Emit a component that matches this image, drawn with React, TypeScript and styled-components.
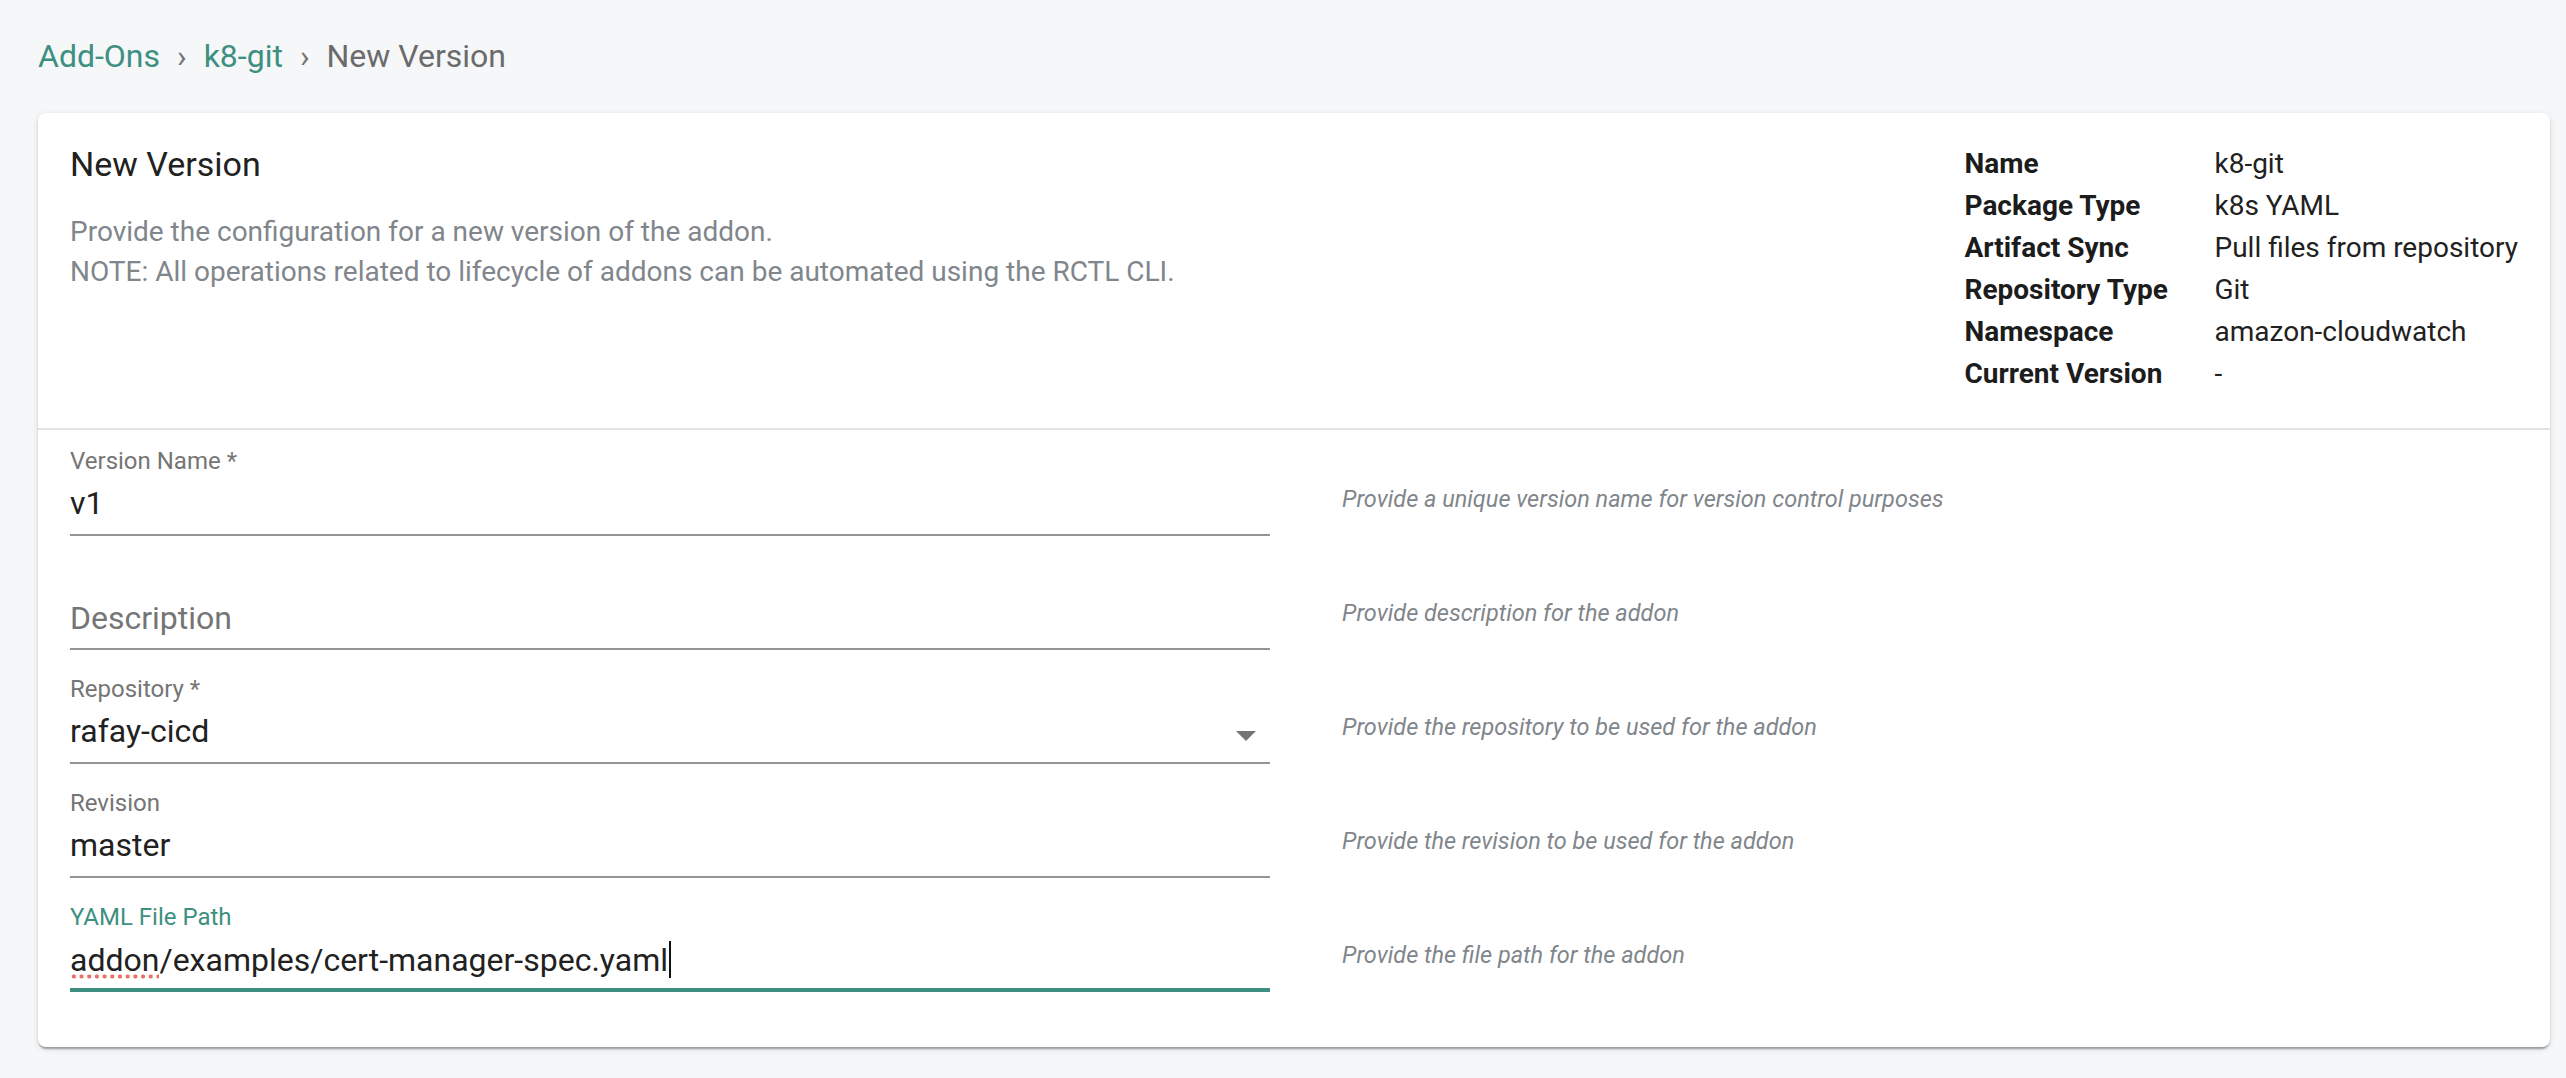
import React from "react";
import styled, { createGlobalStyle } from "styled-components";

const GlobalStyle = createGlobalStyle`
  html, body {
    margin: 0;
    padding: 0;
    background: #f6f7f9;
  }
  body {
    font-family: Roboto, "Liberation Sans", Arial, sans-serif;
    -webkit-font-smoothing: antialiased;
  }
  * { box-sizing: border-box; }
`;

const Page = styled.div`
  min-height: 1078px;
  padding: 32px 16px 32px 38px;
  background: #f6f7f9;
`;

const Breadcrumbs = styled.nav`
  display: flex;
  align-items: baseline;
  font-size: 32px;
  line-height: 48px;
  margin-bottom: 33px;
`;

const Crumb = styled.span<{ $current?: boolean }>`
  color: ${(p) => (p.$current ? "#6b6b6b" : "#3d907f")};
  cursor: ${(p) => (p.$current ? "default" : "pointer")};
`;

const Separator = styled.span`
  color: #757575;
  margin: 0 17px;
`;

const Card = styled.section`
  background: #ffffff;
  border-radius: 8px;
  box-shadow: 0px 4px 2px -2px rgba(0, 0, 0, 0.2), 0px 2px 2px 0px rgba(0, 0, 0, 0.14),
    0px 2px 6px 0px rgba(0, 0, 0, 0.12);
`;

const Header = styled.header`
  display: flex;
  justify-content: space-between;
  padding: 30px 32px 33px 32px;
  border-bottom: 2px solid #e3e3e3;
`;

const HeaderMain = styled.div`
  flex: 1;
`;

const Title = styled.h2`
  margin: 0;
  font-size: 34px;
  line-height: 42px;
  font-weight: 400;
  color: #212121;
`;

const Description = styled.div`
  margin-top: 27px;
  font-size: 28px;
  line-height: 40px;
  color: #80868b;
`;

const InfoTable = styled.dl`
  margin: 0;
  display: grid;
  grid-template-columns: 250px auto;
  font-size: 28px;
  line-height: 42px;
`;

const InfoLabel = styled.dt`
  font-weight: 700;
  color: #1c1c1c;
`;

const InfoValue = styled.dd`
  margin: 0;
  color: #212121;
  white-space: nowrap;
`;

const Fields = styled.div`
  display: flex;
  flex-direction: column;
  gap: 8px;
  padding: 0 32px 55px 32px;
`;

const FieldRow = styled.div`
  display: grid;
  grid-template-columns: 1200px 1fr;
  column-gap: 72px;
`;

const Field = styled.div<{ $focused?: boolean }>`
  height: 106px;
  padding-top: 18px;
  display: flex;
  flex-direction: column;
  border-bottom: ${(p) => (p.$focused ? "4px solid #3d907f" : "2px solid #949494")};
`;

const Label = styled.label<{ $focused?: boolean }>`
  display: block;
  height: 26px;
  font-size: 24px;
  line-height: 26px;
  color: ${(p) => (p.$focused ? "#3d907f" : "#757575")};
  margin-bottom: 11px;
`;

const ValueRow = styled.div<{ $placeholder?: boolean }>`
  height: 36px;
  display: flex;
  align-items: flex-start;
  justify-content: space-between;
  font-size: 32px;
  line-height: 36px;
  color: ${(p) => (p.$placeholder ? "#757575" : "#212121")};
  white-space: nowrap;
  margin-top: ${(p) => (p.$placeholder ? "1px" : "0")};
`;

const DropIcon = styled.svg`
  width: 48px;
  height: 48px;
  margin-top: -2px;
  flex: none;
  fill: #757575;
`;

const Misspelled = styled.span`
  background-image: radial-gradient(circle, #ec6f66 1.8px, transparent 2.3px);
  background-size: 7.7px 5px;
  background-repeat: repeat-x;
  background-position: 0 100%;
`;

const Caret = styled.span`
  display: inline-block;
  width: 2px;
  height: 37px;
  margin-left: 1px;
  vertical-align: -7px;
  background: #111;
`;

const Help = styled.div`
  padding-top: 57px;
  font-size: 23.5px;
  line-height: 24px;
  font-style: italic;
  color: #80868b;
  white-space: nowrap;
`;

const info: [string, string][] = [
  ["Name", "k8-git"],
  ["Package Type", "k8s YAML"],
  ["Artifact Sync", "Pull files from repository"],
  ["Repository Type", "Git"],
  ["Namespace", "amazon-cloudwatch"],
  ["Current Version", "-"],
];

type FieldDef = {
  label: string;
  value?: React.ReactNode;
  placeholder?: string;
  help: string;
  select?: boolean;
  focused?: boolean;
};

const fields: FieldDef[] = [
  { label: "Version Name *", value: "v1", help: "Provide a unique version name for version control purposes" },
  { label: "", placeholder: "Description", help: "Provide description for the addon" },
  { label: "Repository *", value: "rafay-cicd", select: true, help: "Provide the repository to be used for the addon" },
  { label: "Revision", value: "master", help: "Provide the revision to be used for the addon" },
  {
    label: "YAML File Path",
    value: (
      <span>
        <Misspelled>addon</Misspelled>/examples/cert-manager-spec.yaml
        <Caret />
      </span>
    ),
    focused: true,
    help: "Provide the file path for the addon",
  },
];

export default function App() {
  return (
    <>
      <GlobalStyle />
      <Page>
        <Breadcrumbs>
          <Crumb>Add-Ons</Crumb>
          <Separator>›</Separator>
          <Crumb>k8-git</Crumb>
          <Separator>›</Separator>
          <Crumb $current>New Version</Crumb>
        </Breadcrumbs>
        <Card>
          <Header>
            <HeaderMain>
              <Title>New Version</Title>
              <Description>
                <div>Provide the configuration for a new version of the addon.</div>
                <div>NOTE: All operations related to lifecycle of addons can be automated using the RCTL CLI.</div>
              </Description>
            </HeaderMain>
            <InfoTable>
              {info.map(([k, v]) => (
                <React.Fragment key={k}>
                  <InfoLabel>{k}</InfoLabel>
                  <InfoValue>{v}</InfoValue>
                </React.Fragment>
              ))}
            </InfoTable>
          </Header>
          <Fields>
            {fields.map((f, i) => (
              <FieldRow key={i}>
                <Field $focused={f.focused}>
                  <Label $focused={f.focused}>{f.label}</Label>
                  <ValueRow $placeholder={!!f.placeholder}>
                    <span>{f.placeholder ?? f.value}</span>
                    {f.select && (
                      <DropIcon viewBox="0 0 24 24">
                        <path d="M7 10l5 5 5-5z" />
                      </DropIcon>
                    )}
                  </ValueRow>
                </Field>
                <Help>{f.help}</Help>
              </FieldRow>
            ))}
          </Fields>
        </Card>
      </Page>
    </>
  );
}
